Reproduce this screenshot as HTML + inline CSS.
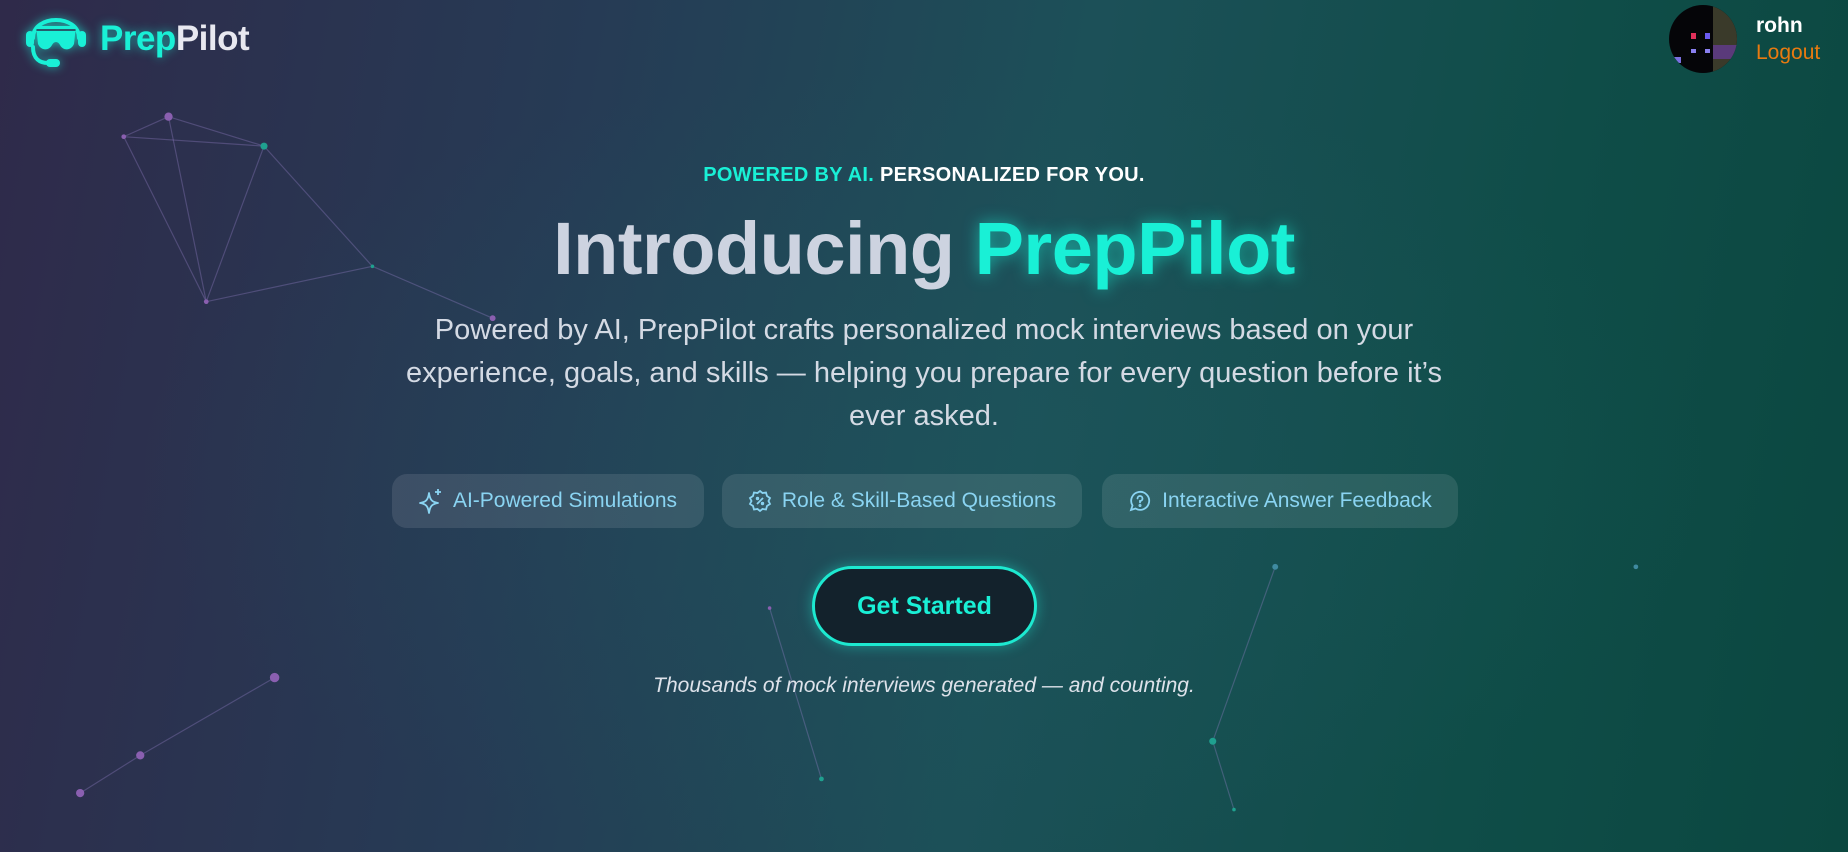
<!DOCTYPE html>
<html><head><meta charset="utf-8"><style>
*{margin:0;padding:0;box-sizing:border-box}
html,body{width:1848px;height:852px;overflow:hidden}
body{font-family:"Liberation Sans","DejaVu Sans",sans-serif;position:relative;
background:linear-gradient(100deg,#2f2a4a 0%,#263b55 30%,#1c5058 55%,#0f4d48 80%,#0b4740 100%);}
.ov{position:absolute;inset:0;background:radial-gradient(ellipse at 50% 55%,rgba(30,90,95,.35),rgba(0,0,0,0) 60%);}
svg.bg{position:absolute;left:0;top:0}
.logo{position:absolute;left:24px;top:10px;display:flex;align-items:center}
.logo .t{font-size:35px;font-weight:bold;margin-left:12px;letter-spacing:-.5px}
.c{color:#19f0d6;text-shadow:0 0 10px rgba(25,240,214,.6)}
.user{position:absolute;left:1669px;top:5px;display:flex;align-items:center}
.av{width:68px;height:68px;border-radius:50%;background:#050508;overflow:hidden;position:relative}
.un{margin-left:19px;font-size:21px;line-height:27px}
.center{position:absolute;left:0;width:1848px;text-align:center}
.pill{position:absolute;top:474px;height:54px;border-radius:15px;background:rgba(255,255,255,.1);color:#8ad4f2;font-size:21px;display:flex;align-items:center;justify-content:center;gap:10px}
.btn{position:absolute;left:812px;top:566px;width:225px;height:80px;border:3px solid #1de9d0;border-radius:40px;background:#13222c;color:#19f0d6;font-size:25px;font-weight:bold;display:flex;align-items:center;justify-content:center;box-shadow:0 0 14px rgba(29,233,208,.45)}
</style></head><body>
<div class="ov"></div>
<svg class="bg" width="1848" height="852" viewBox="0 0 1568 723" preserveAspectRatio="none">
<g stroke="rgba(150,130,200,0.35)" stroke-width="1">
<line x1="105" y1="116" x2="143" y2="99"/><line x1="143" y1="99" x2="224" y2="124"/><line x1="105" y1="116" x2="224" y2="124"/>
<line x1="105" y1="116" x2="175" y2="256"/><line x1="143" y1="99" x2="175" y2="256"/><line x1="224" y1="124" x2="175" y2="256"/>
<line x1="224" y1="124" x2="316" y2="226"/><line x1="175" y1="256" x2="316" y2="226"/><line x1="316" y1="226" x2="418" y2="270"/>
<line x1="68" y1="673" x2="119" y2="641"/><line x1="119" y1="641" x2="233" y2="575"/>
<line x1="653" y1="516" x2="697" y2="661"/><line x1="1082" y1="481" x2="1029" y2="629"/><line x1="1029" y1="629" x2="1047" y2="687"/>
</g>
<g fill="#8a5fb0"><circle cx="105" cy="116" r="2"/><circle cx="143" cy="99" r="3.5"/><circle cx="175" cy="256" r="2"/><circle cx="418" cy="270" r="2.5"/><circle cx="68" cy="673" r="3.5"/><circle cx="119" cy="641" r="3.5"/><circle cx="233" cy="575" r="4"/><circle cx="653" cy="516" r="1.5"/></g>
<g fill="#1fa08f"><circle cx="224" cy="124" r="3"/><circle cx="316" cy="226" r="1.5"/><circle cx="697" cy="661" r="2"/><circle cx="1029" cy="629" r="3"/><circle cx="1047" cy="687" r="1.5"/></g>
<g fill="#3f8aa0"><circle cx="1082" cy="481" r="2.5"/><circle cx="1388" cy="481" r="2"/></g>
</svg>
<div class="logo">
<svg width="64" height="58" viewBox="0 0 64 58" fill="none" stroke="#19f0d6" stroke-width="4" stroke-linecap="round" style="filter:drop-shadow(0 0 5px rgba(25,240,214,.7))">
<path d="M9 28 C9 4 55 4 55 28"/>
<rect x="2" y="21" width="8" height="16" rx="4" fill="#19f0d6" stroke="none"/>
<rect x="54" y="21" width="8" height="16" rx="4" fill="#19f0d6" stroke="none"/>
<path d="M12 16 L52 16 L50 34 C47 41 39 41 36 35 C34 31 30 31 28 35 C25 41 17 41 14 34 Z" fill="#19f0d6" stroke="none"/>
<path d="M13 20 L51 20" stroke="#2d2a48" stroke-width="1.5"/>
<path d="M9 37 C9 49 16 53 24 53"/>
<rect x="22" y="49" width="14" height="8" rx="4" fill="#19f0d6" stroke="none"/>
</svg>
<div class="t"><span class="c">Prep</span><span style="color:#e8e8f0">Pilot</span></div>
</div>
<div class="user">
<div class="av">
<div style="position:absolute;left:44px;top:0;width:24px;height:68px;background:#3a3a2a"></div>
<div style="position:absolute;left:44px;top:40px;width:24px;height:14px;background:#5a3a7a"></div>
<div style="position:absolute;left:22px;top:28px;width:5px;height:6px;background:#e0305a"></div>
<div style="position:absolute;left:36px;top:28px;width:5px;height:6px;background:#6a5af0"></div>
<div style="position:absolute;left:22px;top:44px;width:5px;height:4px;background:#8a80f0"></div>
<div style="position:absolute;left:36px;top:44px;width:5px;height:4px;background:#8a80f0"></div>
<div style="position:absolute;left:0;top:52px;width:12px;height:6px;background:#7a70e0"></div>
</div>
<div class="un"><div style="color:#fff;font-weight:bold">rohn</div><div style="color:#e87a10">Logout</div></div>
</div>
<div class="center" style="top:164px;font-size:20px;font-weight:bold;letter-spacing:.3px"><span style="color:#19f0d6">POWERED BY AI.</span> <span style="color:#fff">PERSONALIZED FOR YOU.</span></div>
<div class="center" style="top:204px;font-size:74px;font-weight:bold;line-height:90px;letter-spacing:-.5px"><span style="color:#cdd3e0">Introducing </span><span class="c" style="text-shadow:0 0 16px rgba(25,240,214,.6)">PrepPilot</span></div>
<div class="center" style="top:309px;font-size:29px;line-height:43px;color:#d4dae4"><div style="width:1080px;margin:0 auto">Powered by AI, PrepPilot crafts personalized mock interviews based on your experience, goals, and skills — helping you prepare for every question before it’s ever asked.</div></div>
<div class="pill" style="left:392px;width:312px">
<svg width="24" height="26" viewBox="0 0 24 26" fill="none" stroke="#8ad4f2" stroke-width="1.8" stroke-linejoin="round"><path d="M10 5 C11 12 13 14 19 15 C13 16 11 18 10 25 C9 18 7 16 1 15 C7 14 9 12 10 5Z"/><path d="M19 1 V7 M16 4 H22"/></svg>AI-Powered Simulations</div>
<div class="pill" style="left:722px;width:360px">
<svg width="24" height="24" viewBox="0 0 24 24" fill="none" stroke="#8ad4f2" stroke-width="1.8"><path d="M12 2 L14.5 4 L18 3.5 L19 7 L22 9 L20.5 12 L22 15 L19 17 L18 20.5 L14.5 20 L12 22 L9.5 20 L6 20.5 L5 17 L2 15 L3.5 12 L2 9 L5 7 L6 3.5 L9.5 4Z"/><path d="M9 15 L15 9"/><circle cx="9.5" cy="9.5" r=".8"/><circle cx="14.5" cy="14.5" r=".8"/></svg>Role &amp; Skill-Based Questions</div>
<div class="pill" style="left:1102px;width:356px">
<svg width="24" height="24" viewBox="0 0 24 24" fill="none" stroke="#8ad4f2" stroke-width="1.8" stroke-linecap="round"><path d="M3 21 L4.5 16.5 A9 9 0 1 1 7.5 19.5 Z"/><path d="M9.5 9.5 A2.5 2.5 0 1 1 12 12 V13.5"/><circle cx="12" cy="16.5" r=".6"/></svg>Interactive Answer Feedback</div>
<div class="btn">Get Started</div>
<div class="center" style="top:674px;font-size:21px;font-style:italic;color:#dde2ea">Thousands of mock interviews generated — and counting.</div>
</body></html>
